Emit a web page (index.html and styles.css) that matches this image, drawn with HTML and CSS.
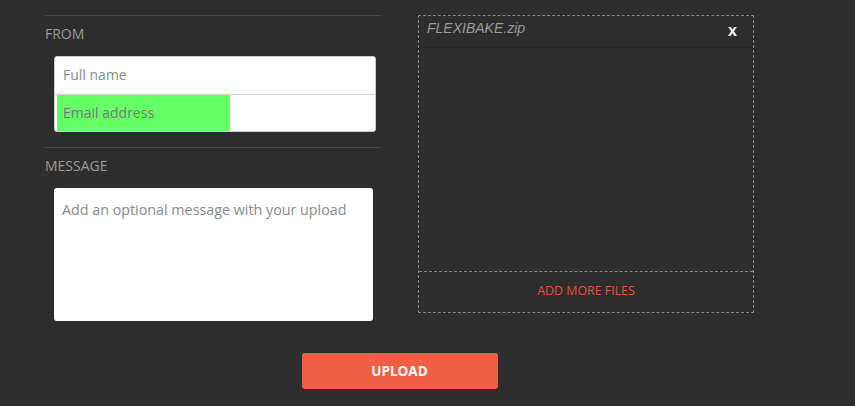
FILE: index.html
```html
<!DOCTYPE html>
<html>
<head>
<meta charset="utf-8">
<link rel="stylesheet" href="styles.css">
</head>
<body>
<div class="form">
  <div class="columns">
    <div class="left">
      <section class="group">
        <div class="label">FROM</div>
        <div class="fields">
          <div class="field">Full name</div>
          <div class="field field-email"><span class="autofill">Email address</span></div>
        </div>
      </section>
      <section class="group">
        <div class="label">MESSAGE</div>
        <div class="message">Add an optional message with your upload</div>
      </section>
    </div>
    <div class="right">
      <div class="drop">
        <div class="file-row">
          <span class="file-name">FLEXIBAKE.zip</span>
          <span class="remove">x</span>
        </div>
        <div class="drop-body"></div>
        <div class="add-more">ADD MORE FILES</div>
      </div>
    </div>
  </div>
  <div class="actions">
    <button class="upload">UPLOAD</button>
  </div>
</div>
</body>
</html>
```

FILE: styles.css
```css
html, body {
  margin: 0;
  padding: 0;
  background: #2d2d2d;
  font-family: "Open Sans", "DejaVu Sans", sans-serif;
}
.form {
  width: 709px;
  padding: 15px 0 0 45px;
}
.columns {
  display: flex;
  gap: 37px;
}
.left {
  width: 336px;
}
.group {
  border-top: 1px solid #444;
}
.label {
  color: #9a9a9a;
  font-size: 14px;
  line-height: 16px;
  padding: 10px 0 0 0;
  height: 30px;
}
.fields {
  margin-left: 9px;
  width: 320px;
  background: #fff;
  border: 1px solid #ccc;
  border-radius: 3px;
  margin-bottom: 15px;
}
.field {
  height: 37px;
  line-height: 36px;
  font-size: 14px;
  color: #8a8a8a;
  padding-left: 8px;
  box-sizing: border-box;
}
.field + .field {
  border-top: 1px solid #d5d5d5;
  padding: 0 0 0 2px;
  height: 37px;
}
.autofill {
  display: block;
  width: 167px;
  height: 36px;
  background: #66ff66;
  padding-left: 6px;
  color: #777;
}
.message {
  margin-left: 9px;
  width: 319px;
  height: 133px;
  background: #fff;
  border-radius: 3px;
  box-sizing: border-box;
  padding: 13px 8px;
  font-size: 14.3px;
  line-height: 18px;
  color: #8a8a8a;
}
.right {
  width: 336px;
}
.drop {
  border: 1px dashed #888;
  height: 296px;
  display: flex;
  flex-direction: column;
}
.file-row {
  height: 31px;
  border-bottom: 1px solid #262626;
  display: flex;
  justify-content: space-between;
  padding: 0 16px 0 8px;
}
.file-name {
  font-family: "Liberation Sans", Arial, sans-serif;
  font-style: italic;
  font-size: 14px;
  line-height: 25px;
  color: #9a9a9a;
}
.remove {
  font-family: "Liberation Sans", Arial, sans-serif;
  color: #fff;
  font-weight: bold;
  font-size: 16px;
  line-height: 30px;
}
.drop-body {
  flex: 1;
  border-bottom: 1px dashed #888;
}
.add-more {
  height: 40px;
  line-height: 38px;
  text-align: center;
  font-size: 12.4px;
  color: #e2553c;
}
.actions {
  display: flex;
  justify-content: center;
  width: 709px;
  padding-top: 32px;
}
.upload {
  width: 196px;
  height: 36px;
  background: #f25e44;
  border: none;
  border-radius: 3px;
  color: #fff;
  font-family: "Open Sans", sans-serif;
  font-weight: bold;
  font-size: 13.5px;
}
```
